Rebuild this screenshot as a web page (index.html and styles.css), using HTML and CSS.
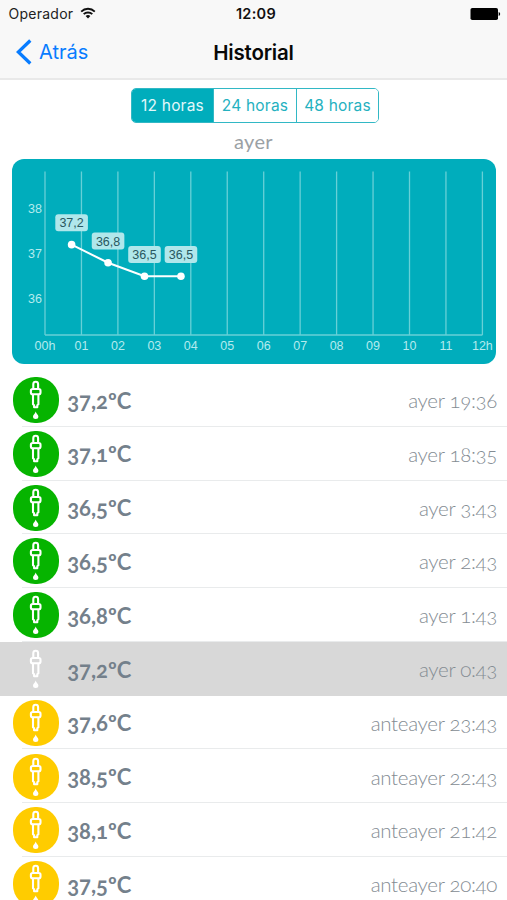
FILE: index.html
```html
<!DOCTYPE html>
<html lang="es">
<head>
<meta charset="utf-8">
<title>Historial</title>
<link rel="stylesheet" href="styles.css">
</head>
<body>
<svg class="defs" width="0" height="0" aria-hidden="true">
  <symbol id="dropper" viewBox="0 0 46 46">
    <g fill="none" stroke="#fff" stroke-width="2.1" stroke-linejoin="round">
      <path d="M20.300 11.500V7.200a2.400 2.400 0 0 1 4.800 0v4.300"/>
      <rect x="17.900" y="12" width="9.600" height="5.200" rx="1.800"/>
      <path d="M20 17.500v9.800l1.100 1v2h3.200v-2l1.100-1v-9.800"/>
    </g>
    <path fill="#fff" d="M22.700 34.400c.5 2 2.700 3.300 2.700 5.100a2.700 2.500 0 0 1-5.400 0c0-1.800 2.200-3.100 2.700-5.100z"/>
  </symbol>
</svg>
<header class="header">
  <div class="status">
    <span class="carrier">Operador</span>
    <svg class="wifi" viewBox="0 0 16 12" width="16" height="12">
      <g fill="none" stroke="#111" stroke-width="1.9">
        <path d="M1.200 4.600a9.700 9.700 0 0 1 13.600 0"/>
        <path d="M3.700 7.200a6.100 6.100 0 0 1 8.600 0"/>
      </g>
      <path fill="#111" d="M5.600 9.100a3.400 3.400 0 0 1 4.800 0L8 11.500z"/>
    </svg>
    <span class="clock">12:09</span>
    <svg class="battery" viewBox="0 0 31 12" width="31" height="12">
      <rect x=".5" width="27.500" height="12" rx="1.800"/>
      <path d="M28.700 4q1.500.4 1.500 2t-1.500 2z"/>
    </svg>
  </div>
  <nav class="nav">
    <a class="back"><svg viewBox="0 0 16 26" width="16" height="26"><path d="M14.300 1.500 2.300 13l12 11.500" fill="none" stroke="#087cff" stroke-width="3.300"/></svg><span>Atrás</span></a>
    <h1>Historial</h1>
  </nav>
</header>
<main>
  <div class="segments">
    <button class="active">12 horas</button><button>24 horas</button><button>48 horas</button>
  </div>
  <p class="day">ayer</p>
  <section class="chart">
    <svg id="plot" viewBox="0 0 484 205" width="484" height="205"></svg>
  </section>
  <ul class="list" id="list"></ul>
</main>
<script src="app.js"></script>
</body>
</html>
```
FILE: styles.css
```css
* { box-sizing: border-box; }
body {
  margin: 0;
  height: 900px;
  overflow: hidden;
  background: #fff;
  font-family: Inter, "Liberation Sans", sans-serif;
}
.defs { display: block; height: 0; }
.header {
  height: 80px;
  background: #f8f8f8;
  border-bottom: 2px solid #e9e9e9;
}
.status {
  display: grid;
  grid-template-columns: auto 16px 1fr 31px;
  align-items: center;
  height: 27px;
  padding: 0 6px 0 8.500px;
  font-size: 14px;
  color: #222;
}
.carrier { width: 65.500px; font-size: 14px; letter-spacing: .25px; }
.wifi { margin-left: 6px; margin-top: -2px; }
.clock {
  width: 60px;
  margin-left: 136px;
  text-align: center;
  font-weight: 600;
  font-size: 14.500px;
  letter-spacing: .3px;
  color: #111;
}
.nav {
  display: grid;
  grid-template-columns: 1fr auto 1fr;
  align-items: center;
  height: 50px;
}
.back {
  display: flex;
  align-items: center;
  gap: 7px;
  padding-left: 16px;
  color: #087cff;
  font-size: 20px;
  letter-spacing: 0;
}
.nav h1 {
  margin: 0;
  font-size: 20.500px;
  font-weight: 600;
  letter-spacing: -.2px;
  color: #080808;
}
main { padding-top: 8px; }
.segments {
  display: grid;
  grid-template-columns: 81px 83px 82px;
  width: 248px;
  height: 35px;
  margin: 0 0 0 131px;
  border: 1px solid #32b8c5;
  border-radius: 5px;
  overflow: hidden;
}
.segments button {
  padding: 0;
  border: 0;
  background: #fff;
  color: #25b1bf;
  font: 400 15.500px Inter, sans-serif;
  letter-spacing: .2px;
}
.segments button + button { border-left: 1px solid #32b8c5; }
.segments .active { background: #00adbc; color: #e2f8fa; }
.day {
  margin: 5px 0 0;
  height: 30.500px;
  text-align: center;
  font: 400 20px/26px Lato, sans-serif;
  letter-spacing: .3px;
  color: #9ba1a5;
}
.chart {
  width: 484px;
  height: 205px;
  margin: 0 0 0 12px;
  border-radius: 12px;
  background: #00adbc;
}
.chart svg { display: block; }
.grid { stroke: #67d0d7; stroke-width: 1.300; }
.axis { fill: #b4ebee; font: 12.500px "Liberation Sans", sans-serif; text-anchor: middle; }
.tag { fill: #b0e7eb; }
.value { fill: #285860; font: 12.500px "Liberation Sans", sans-serif; text-anchor: middle; }
.curve { fill: none; stroke: #fff; stroke-width: 2; }
.dot { fill: #fff; }
.list { margin: 9.800px 0 0; padding: 0; list-style: none; }
.row {
  display: flex;
  align-items: center;
  height: 53.780px;
  padding: 0 10px 0 12.700px;
  background: linear-gradient(#e9ebec, #e9ebec) 22px 100% / 100% 1.300px no-repeat;
}
.icon { width: 46px; height: 46px; flex: none; border-radius: 22px; }
.icon svg { display: block; width: 46px; height: 46px; }
.green .icon { background: #06b400; }
.yellow .icon { background: #fc0; }
.selected { background: #d8d8d8; }
.temp {
  margin-left: 8.500px;
  font: 700 22px Lato, sans-serif;
  font-variant-numeric: oldstyle-nums;
  color: #74808b;
}
.time {
  margin-left: auto;
  font: 300 20.500px Lato, sans-serif;
  font-variant-numeric: oldstyle-nums;
  letter-spacing: -.32px;
  color: #848c93;
}
```
FILE: app.js
```js
const readings = [
  ["37,2", "ayer 19:36", "green"],
  ["37,1", "ayer 18:35", "green"],
  ["36,5", "ayer 3:43", "green"],
  ["36,5", "ayer 2:43", "green"],
  ["36,8", "ayer 1:43", "green"],
  ["37,2", "ayer 0:43", "selected"],
  ["37,6", "anteayer 23:43", "yellow"],
  ["38,5", "anteayer 22:43", "yellow"],
  ["38,1", "anteayer 21:42", "yellow"],
  ["37,5", "anteayer 20:40", "yellow"]
];
document.getElementById("list").innerHTML = readings.map(([t, when, state]) =>
  `<li class="row ${state}"><span class="icon"><svg><use href="#dropper"/></svg></span><span class="temp">${t}ºC</span><span class="time">${when}</span></li>`
).join("");

const x = h => 33 + h * 36.45;
const y = t => 49.5 + (38 - t) * 45.2;
const labels = ["00h", "01", "02", "03", "04", "05", "06", "07", "08", "09", "10", "11", "12h"];
const points = [[0.73, 37.2], [1.73, 36.8], [2.73, 36.5], [3.73, 36.5]];
let out = "";
labels.forEach((l, i) => {
  out += `<line class="grid" x1="${x(i)}" x2="${x(i)}" y1="12.500" y2="176"/>`;
  out += `<text class="axis" x="${x(i)}" y="190.500">${l}</text>`;
});
out += `<line class="grid" x1="33" x2="${x(12)}" y1="176" y2="176"/>`;
[38, 37, 36].forEach(t => {
  out += `<text class="axis" x="23" y="${y(t) + 4.2}">${t}</text>`;
});
points.forEach(([h, t]) => {
  out += `<rect class="tag" x="${x(h) - 16.3}" y="${y(t) - 30.300}" width="32.600" height="17" rx="3"/>`;
  out += `<text class="value" x="${x(h)}" y="${y(t) - 17.200}">${String(t).replace(".", ",")}</text>`;
});
out += `<polyline class="curve" points="${points.map(([h, t]) => x(h) + "," + y(t)).join(" ")}"/>`;
points.forEach(([h, t]) => { out += `<circle class="dot" cx="${x(h)}" cy="${y(t)}" r="3.800"/>`; });
document.getElementById("plot").innerHTML = out;
```
